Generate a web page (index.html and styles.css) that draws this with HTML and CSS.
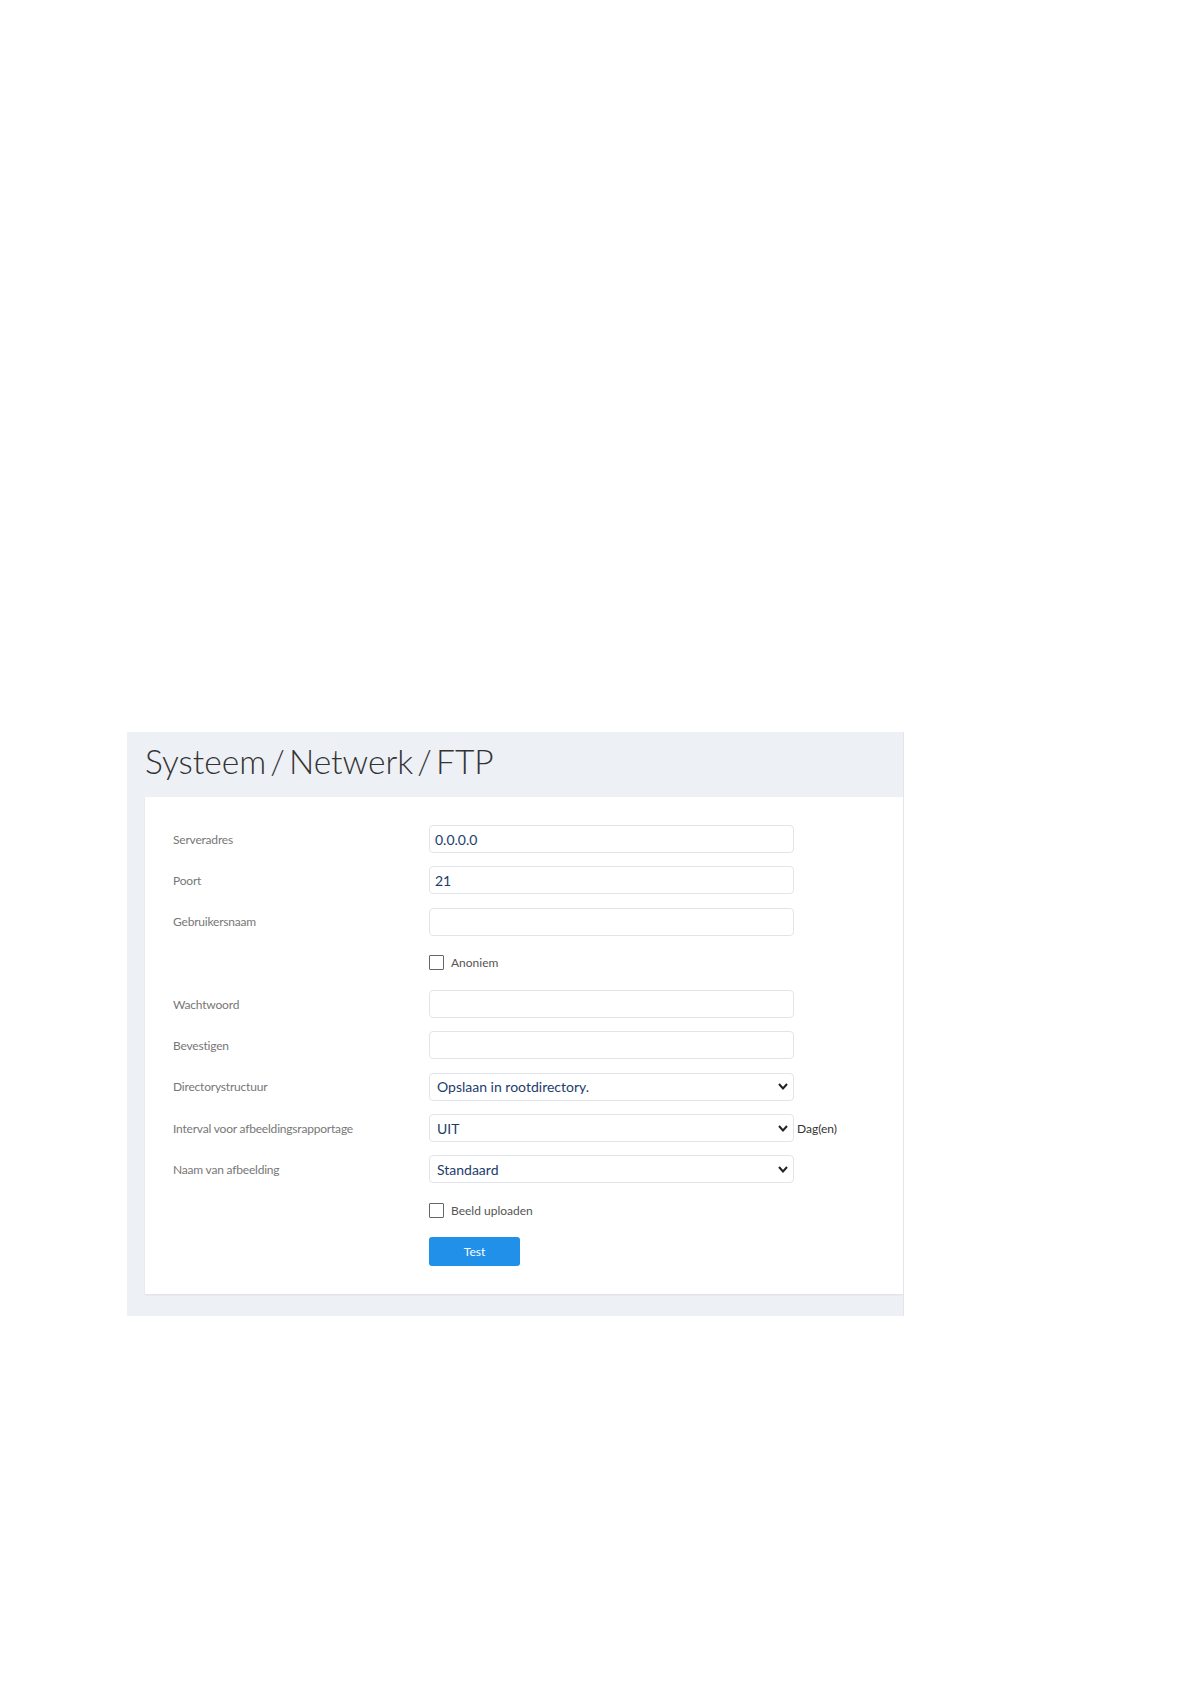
FILE: index.html
```html
<!DOCTYPE html>
<html lang="nl">
<head>
    <meta charset="UTF-8">
    <title>Systeem / Netwerk / FTP</title>
    <link rel="stylesheet" href="styles.css">
</head>
<body>
    <div class="page">
        <div class="panel">
            <h1 class="page-title">Systeem / Netwerk / FTP</h1>

            <div class="card">
                <form class="ftp-form">
                    <div class="form-row">
                        <label class="form-label">Serveradres</label>
                        <input class="form-input" type="text" value="0.0.0.0">
                    </div>
                    <div class="form-row">
                        <label class="form-label">Poort</label>
                        <input class="form-input" type="text" value="21">
                    </div>
                    <div class="form-row">
                        <label class="form-label">Gebruikersnaam</label>
                        <input class="form-input" type="text" value="">
                    </div>
                    <div class="form-row">
                        <span class="form-label"></span>
                        <label class="check"><span class="check-box"></span>Anoniem</label>
                    </div>
                    <div class="form-row">
                        <label class="form-label">Wachtwoord</label>
                        <input class="form-input" type="password" value="">
                    </div>
                    <div class="form-row">
                        <label class="form-label">Bevestigen</label>
                        <input class="form-input" type="password" value="">
                    </div>
                    <div class="form-row">
                        <label class="form-label">Directorystructuur</label>
                        <div class="form-select">
                            <span>Opslaan in rootdirectory.</span>
                            <svg class="chevron" width="10" height="7" viewBox="0 0 10 7"><polyline points="1,1 5,5.5 9,1" fill="none" stroke="#222" stroke-width="2"/></svg>
                        </div>
                    </div>
                    <div class="form-row">
                        <label class="form-label">Interval voor afbeeldingsrapportage</label>
                        <div class="form-select">
                            <span>UIT</span>
                            <svg class="chevron" width="10" height="7" viewBox="0 0 10 7"><polyline points="1,1 5,5.5 9,1" fill="none" stroke="#222" stroke-width="2"/></svg>
                        </div>
                        <span class="unit">Dag(en)</span>
                    </div>
                    <div class="form-row">
                        <label class="form-label">Naam van afbeelding</label>
                        <div class="form-select">
                            <span>Standaard</span>
                            <svg class="chevron" width="10" height="7" viewBox="0 0 10 7"><polyline points="1,1 5,5.5 9,1" fill="none" stroke="#222" stroke-width="2"/></svg>
                        </div>
                    </div>
                    <div class="form-row">
                        <span class="form-label"></span>
                        <label class="check"><span class="check-box"></span>Beeld uploaden</label>
                    </div>
                    <div class="form-row">
                        <span class="form-label"></span>
                        <button class="btn-test" type="button">Test</button>
                    </div>
                </form>
            </div>
        </div>
    </div>
</body>
</html>
```

FILE: styles.css
```css
body {
    margin: 0;
    background-color: white;
    font-family: 'Lato', 'Noto Sans', sans-serif;
}

.page {
    padding: 732px 0 0 127px;
}

.panel {
    width: 777px;
    background-color: #edf0f5;
    border-right: 1px solid #e2e5ea;
    padding: 0 0 22px 18px;
    box-sizing: border-box;
    overflow: hidden;
}

.page-title {
    margin: 0;
    height: 65px;
    padding-top: 7px;
    box-sizing: border-box;
    font-size: 33.5px;
    font-weight: 300;
    color: #333;
    letter-spacing: 0;
    word-spacing: -5px;
    line-height: 44px;
}

.card {
    background-color: white;
    box-shadow: 0 1px 2px rgba(0, 0, 0, 0.08);
    padding: 28px 0 28px 28px;
}

.ftp-form {
    display: flex;
    flex-direction: column;
    gap: 13.3px;
}

.form-row {
    display: flex;
    align-items: center;
    height: 28px;
}

.form-label {
    width: 256px;
    flex-shrink: 0;
    font-size: 12px;
    color: #777;
    letter-spacing: -0.2px;
}

.form-input,
.form-select {
    width: 365px;
    height: 28px;
    box-sizing: border-box;
    border: 1px solid #e1e5eb;
    border-radius: 4px;
    background: white;
    padding: 0 5px;
    font-family: 'Lato', 'Noto Sans', sans-serif;
    font-size: 14px;
    color: #1c3d6b;
    outline: none;
}

.form-select {
    display: flex;
    align-items: center;
    justify-content: space-between;
    padding: 0 5px 0 7px;
}

.chevron {
    display: block;
}

.unit {
    margin-left: 3px;
    font-size: 12px;
    color: #333;
}

.check {
    display: flex;
    align-items: center;
    gap: 7px;
    font-size: 12px;
    color: #555;
}

.check-box {
    width: 13px;
    height: 13px;
    border: 1px solid #666;
    border-radius: 1px;
    background: white;
}

.btn-test {
    width: 91px;
    height: 29px;
    border: none;
    border-radius: 3px;
    background-color: #2190e8;
    color: white;
    font-family: 'Lato', 'Noto Sans', sans-serif;
    font-size: 12px;
    cursor: pointer;
}
```
